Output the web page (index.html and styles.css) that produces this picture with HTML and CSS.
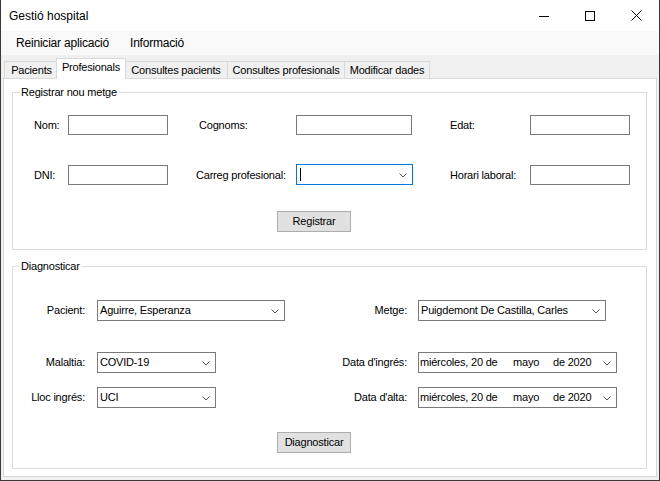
FILE: index.html
```html
<!DOCTYPE html>
<html lang="ca">
<head>
<meta charset="utf-8">
<title>Gestió hospital</title>
<link rel="stylesheet" href="styles.css">
</head>
<body>
<div class="window">
  <div class="titlebar">
    <span class="title">Gestió hospital</span>
    <div class="caption-buttons">
      <span class="cbtn"><svg width="10" height="10" viewBox="0 0 10 10"><path d="M0 5.5H10" stroke="#000" stroke-width="1"/></svg></span>
      <span class="cbtn"><svg width="10" height="10" viewBox="0 0 10 10"><rect x="0.5" y="0.5" width="9" height="9" fill="none" stroke="#000" stroke-width="1"/></svg></span>
      <span class="cbtn"><svg width="11" height="11" viewBox="0 0 11 11"><path d="M0.5 0.5L10.5 10.5M10.5 0.5L0.5 10.5" stroke="#000" stroke-width="1"/></svg></span>
    </div>
  </div>
  <div class="menubar">
    <span class="menu-item menu-first">Reiniciar aplicació</span>
    <span class="menu-item">Informació</span>
  </div>
  <div class="tabstrip">
    <span class="tab tab-pac">Pacients</span>
    <span class="tab tab-active">Profesionals</span>
    <span class="tab tab-cpac">Consultes pacients</span>
    <span class="tab tab-cprof">Consultes profesionals</span>
    <span class="tab tab-mod">Modificar dades</span>
  </div>
  <div class="tabpage">
    <fieldset class="group group-reg">
      <legend>Registrar nou metge</legend>
      <div class="reg-grid">
        <span class="lbl lbl-a">Nom:</span>
        <span class="textbox"></span>
        <span class="lbl lbl-b lbl-cog">Cognoms:</span>
        <span class="textbox w-116"></span>
        <span class="lbl lbl-c">Edat:</span>
        <span class="textbox"></span>

        <span class="lbl lbl-a">DNI:</span>
        <span class="textbox"></span>
        <span class="lbl lbl-b">Carreg profesional:</span>
        <span class="combo combo-focus w-117"><span class="caret"></span><svg class="chev" width="8" height="5" viewBox="0 0 8 5"><path d="M0.5 0.5L4 4L7.5 0.5" fill="none" stroke="#555" stroke-width="1"/></svg></span>
        <span class="lbl lbl-c">Horari laboral:</span>
        <span class="textbox"></span>
      </div>
      <button class="btn btn-reg">Registrar</button>
    </fieldset>

    <fieldset class="group group-diag">
      <legend>Diagnosticar</legend>
      <div class="diag-grid">
        <span class="lbl lbl-r1">Pacient:</span>
        <span class="combo w-188"><span class="combo-text">Aguirre, Esperanza</span><svg class="chev" width="8" height="5" viewBox="0 0 8 5"><path d="M0.5 0.5L4 4L7.5 0.5" fill="none" stroke="#555" stroke-width="1"/></svg></span>
        <span class="lbl lbl-r2">Metge:</span>
        <span class="combo w-188"><span class="combo-text">Puigdemont De Castilla, Carles</span><svg class="chev" width="8" height="5" viewBox="0 0 8 5"><path d="M0.5 0.5L4 4L7.5 0.5" fill="none" stroke="#555" stroke-width="1"/></svg></span>

        <span class="lbl lbl-r1">Malaltia:</span>
        <span class="combo w-119"><span class="combo-text">COVID-19</span><svg class="chev" width="8" height="5" viewBox="0 0 8 5"><path d="M0.5 0.5L4 4L7.5 0.5" fill="none" stroke="#555" stroke-width="1"/></svg></span>
        <span class="lbl lbl-r2">Data d'ingrés:</span>
        <span class="combo datepicker w-199"><span class="dp-text"><span class="dp-day">miércoles, 20 de</span><span class="dp-month">mayo</span><span>de 2020</span></span><svg class="chev" width="8" height="5" viewBox="0 0 8 5"><path d="M0.5 0.5L4 4L7.5 0.5" fill="none" stroke="#555" stroke-width="1"/></svg></span>

        <span class="lbl lbl-r1">Lloc ingrés:</span>
        <span class="combo w-119"><span class="combo-text">UCI</span><svg class="chev" width="8" height="5" viewBox="0 0 8 5"><path d="M0.5 0.5L4 4L7.5 0.5" fill="none" stroke="#555" stroke-width="1"/></svg></span>
        <span class="lbl lbl-r2">Data d'alta:</span>
        <span class="combo datepicker w-199"><span class="dp-text"><span class="dp-day">miércoles, 20 de</span><span class="dp-month">mayo</span><span>de 2020</span></span><svg class="chev" width="8" height="5" viewBox="0 0 8 5"><path d="M0.5 0.5L4 4L7.5 0.5" fill="none" stroke="#555" stroke-width="1"/></svg></span>
      </div>
      <button class="btn btn-diag">Diagnosticar</button>
    </fieldset>
  </div>
</div>
</body>
</html>
```

FILE: styles.css
```css
html, body {
  margin: 0;
  padding: 0;
  background: #ffffff;
}

body {
  font-family: "Liberation Sans", Arial, sans-serif;
  font-size: 11px;
  color: #000;
}

.window {
  width: 660px;
  height: 481px;
  box-sizing: border-box;
  border: 1px solid #3a3a3a;
  border-top: none;
  background: #f0f0f0;
  display: flex;
  flex-direction: column;
  overflow: hidden;
}

/* Title bar */
.titlebar {
  height: 31px;
  flex-shrink: 0;
  background: #ffffff;
  display: flex;
  align-items: center;
}

.title {
  flex: 1;
  padding-left: 8px;
  font-size: 12px;
  line-height: 16px;
  padding-top: 1px;
}

.caption-buttons {
  display: flex;
  align-self: stretch;
}

.cbtn {
  width: 46px;
  display: flex;
  align-items: center;
  justify-content: center;
}

/* Menu bar */
.menubar {
  height: 24px;
  flex-shrink: 0;
  background: #f9f9f9;
  display: flex;
  align-items: center;
  padding-left: 8px;
  font-size: 12px;
  letter-spacing: -0.2px;
}

.menu-item {
  padding: 0 7px;
  white-space: nowrap;
}

.menu-first {
  width: 100px;
}

/* Tabs */
.tabstrip {
  height: 23px;
  flex-shrink: 0;
  display: flex;
  align-items: flex-end;
  padding-left: 3px;
  letter-spacing: -0.2px;
}

.tab {
  box-sizing: border-box;
  height: 17px;
  border: 1px solid #d9d9d9;
  border-right: none;
  border-bottom: none;
  background: #f0f0f0;
  display: flex;
  align-items: center;
  justify-content: center;
  white-space: nowrap;
  padding-bottom: 1px;
}

.tab-pac { width: 54px; }
.tab-cpac { width: 103px; }
.tab-cprof { width: 117px; }
.tab-mod { width: 86px; border-right: 1px solid #d9d9d9; }

.tab-active {
  width: 70px;
  height: 21px;
  margin: 0 -2px -1px -2px;
  background: #ffffff;
  border-right: 1px solid #d9d9d9;
  position: relative;
  z-index: 1;
  padding-bottom: 4px;
}

/* Tab page */
.tabpage {
  height: 399px;
  box-sizing: border-box;
  margin: 0 2px 3px 2px;
  border: 1px solid #d9d9d9;
  background: #ffffff;
  padding: 7px 9px 0 8px;
  display: flex;
  flex-direction: column;
  letter-spacing: -0.2px;
}

.group {
  margin: 0;
  padding: 0;
  border: 1px solid #dcdcdc;
  min-width: 0;
}

.group legend {
  margin-left: 6px;
  padding: 0 2px;
  line-height: 13px;
  font-size: 11px;
}

.group-reg {
  padding-bottom: 17px;
}

.group-diag {
  margin-top: 10px;
  padding-bottom: 15px;
}

/* Labels and controls */
.lbl {
  white-space: nowrap;
  line-height: 20px;
  height: 20px;
}

.textbox {
  display: block;
  box-sizing: border-box;
  width: 100px;
  height: 20px;
  border: 1px solid #7a7a7a;
  background: #ffffff;
}

.w-116 { width: 116px; }
.w-117 { width: 117px; }
.w-119 { width: 119px; }
.w-188 { width: 188px; }
.w-199 { width: 199px; }

.combo {
  box-sizing: border-box;
  height: 21px;
  border: 1px solid #7a7a7a;
  background: #ffffff;
  display: flex;
  align-items: center;
  justify-content: space-between;
  padding: 0 5px 0 2px;
  justify-self: start;
  white-space: nowrap;
}

.combo-focus {
  border-color: #0078d7;
}

.caret {
  width: 1px;
  height: 13px;
  background: #000;
  margin-left: 1px;
}

.chev {
  display: block;
  flex-shrink: 0;
  margin-top: 1px;
}

.combo-text {
  padding-bottom: 1px;
}

.datepicker {
  padding-left: 1px;
}

.dp-text {
  display: flex;
  padding-bottom: 1px;
}

.dp-day {
  width: 93px;
}

.dp-month {
  width: 40px;
}

/* Registrar grid */
.reg-grid {
  display: grid;
  grid-template-columns: 55px 100px 128px 117px 117px 100px;
  grid-template-rows: 20px 50px;
  align-items: end;
  margin-top: 16px;
}

.lbl-a { padding-left: 21px; }
.lbl-b { padding-left: 28px; }
.lbl-cog { padding-left: 31px; }
.lbl-c { padding-left: 37px; }

/* Diagnosticar grid */
.diag-grid {
  display: grid;
  grid-template-columns: 84px 188px 133px 199px;
  grid-template-rows: 21px 52px 35px;
  align-items: end;
  margin-top: 27px;
}

.diag-grid .lbl {
  line-height: 21px;
  height: 21px;
  text-align: right;
}

.lbl-r1 { padding-right: 12px; }
.lbl-r2 { padding-right: 11px; }

/* Buttons */
.btn {
  display: block;
  box-sizing: border-box;
  width: 74px;
  height: 21px;
  margin-left: 264px;
  padding: 0 0 1px 0;
  border: 1px solid #adadad;
  background: #e1e1e1;
  font-family: "Liberation Sans", Arial, sans-serif;
  font-size: 11px;
  letter-spacing: -0.2px;
  color: #000;
}

.btn-reg { margin-top: 26px; }
.btn-diag { margin-top: 24px; }
```
